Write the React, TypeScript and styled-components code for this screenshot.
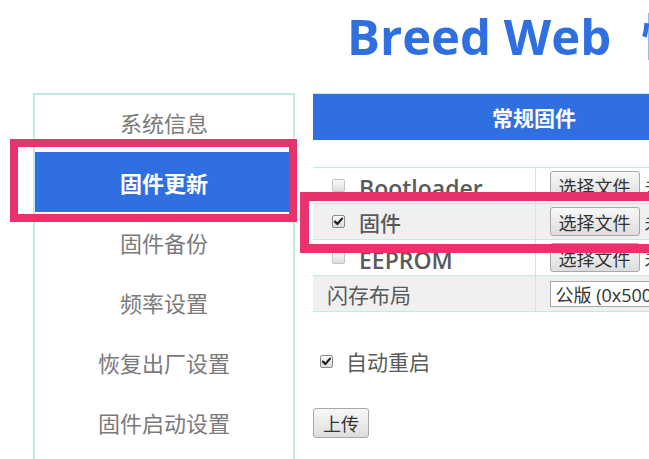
import React from 'react';
import styled, { createGlobalStyle } from 'styled-components';

const GlobalStyle = createGlobalStyle`
    html, body {
        margin: 0;
        padding: 0;
        background: #ffffff;
        overflow: hidden;
    }
    body {
        font-family: 'Open Sans', 'Noto Sans CJK SC', sans-serif;
    }
`;

const NAV_ITEMS = ['系统信息', '固件更新', '固件备份', '频率设置', '恢复出厂设置', '固件启动设置'];

interface FirmwareRow {
    label: string;
    checked: boolean;
    latin: boolean;
}

const FIRMWARE_ROWS: FirmwareRow[] = [
    { label: 'Bootloader', checked: false, latin: true },
    { label: '固件', checked: true, latin: false },
    { label: 'EEPROM', checked: false, latin: true },
];

const Check = ({ checked }: { checked: boolean }) => (
    <CheckBox $checked={checked}>
        {checked && (
            <svg width="11" height="11" viewBox="0 0 11 11">
                <path d="M2 5.6 L4.4 8 L9 2.6" fill="none" stroke="#222" strokeWidth="2.2" strokeLinecap="round" strokeLinejoin="round" />
            </svg>
        )}
    </CheckBox>
);

export default function App() {
    return (
        <Page>
            <GlobalStyle />
            <Header>
                <Title>
                    Breed Web <TitleTail>恢复控制台</TitleTail>
                </Title>
            </Header>
            <Layout>
                <Sidebar>
                    {NAV_ITEMS.map((item) => (
                        <NavItem key={item} $active={item === '固件更新'}>
                            {item}
                            {item === '固件更新' && <NavMarker />}
                        </NavItem>
                    ))}
                </Sidebar>
                <Main>
                    <SectionBar>常规固件</SectionBar>
                    <Table>
                        <colgroup>
                            <col style={{ width: 222 }} />
                            <col />
                        </colgroup>
                        <tbody>
                            {FIRMWARE_ROWS.map((row, i) => (
                                <Row key={row.label} $shaded={i % 2 === 1}>
                                    <LabelCell>
                                        <LabelWrap>
                                            <Check checked={row.checked} />
                                            <RowLabel $latin={row.latin}>{row.label}</RowLabel>
                                        </LabelWrap>
                                        {row.checked && <RowMarker />}
                                    </LabelCell>
                                    <ValueCell>
                                        <FileButton>选择文件</FileButton>
                                        <FileHint>未选择任何文件</FileHint>
                                    </ValueCell>
                                </Row>
                            ))}
                            <Row $shaded>
                                <LabelCell>
                                    <PlainLabel>闪存布局</PlainLabel>
                                </LabelCell>
                                <ValueCell>
                                    <LayoutSelect>公版 (0x50000)</LayoutSelect>
                                </ValueCell>
                            </Row>
                        </tbody>
                    </Table>
                    <OptionRow>
                        <Check checked />
                        <OptionText>自动重启</OptionText>
                    </OptionRow>
                    <UploadButton>上传</UploadButton>
                </Main>
            </Layout>
        </Page>
    );
}

const Page = styled.div`
    width: 649px;
    height: 459px;
    overflow: hidden;
    position: relative;
`;

const Header = styled.div`
    height: 93px;
    padding-left: 347px;
    box-sizing: border-box;
`;

const Title = styled.h1`
    margin: 0;
    padding-top: 2px;
    font-family: 'Open Sans', 'Noto Sans CJK SC', sans-serif;
    font-weight: 700;
    font-size: 49px;
    line-height: 68px;
    color: #2f6fe0;
    white-space: nowrap;
`;

const TitleTail = styled.span`
    margin-left: 17px;
`;

const Layout = styled.div`
    display: flex;
    gap: 18px;
    padding-left: 33px;
    align-items: flex-start;
`;

const Sidebar = styled.nav`
    width: 262px;
    flex-shrink: 0;
    box-sizing: border-box;
    border: 2px solid #bdeee5;
    height: 380px;
`;

const NavItem = styled.div<{ $active?: boolean }>`
    position: relative;
    height: 60px;
    display: flex;
    align-items: center;
    justify-content: center;
    font-family: 'Noto Sans CJK SC', sans-serif;
    font-size: 22px;
    font-weight: ${({ $active }) => ($active ? 700 : 400)};
    color: ${({ $active }) => ($active ? '#ffffff' : '#7a7a7a')};
    background: ${({ $active }) => ($active ? '#2f6fe0' : 'transparent')};

    &:first-child {
        margin-top: -3px;
    }
`;

const NavMarker = styled.span`
    position: absolute;
    left: -25px;
    top: -13px;
    width: 287px;
    height: 83px;
    box-sizing: border-box;
    border: 8px solid #e8326b;
    pointer-events: none;
`;

const Main = styled.div`
    width: 442px;
    flex-shrink: 0;
    display: flex;
    flex-direction: column;
    align-items: flex-start;
`;

const SectionBar = styled.div`
    align-self: stretch;
    height: 47px;
    display: flex;
    align-items: center;
    justify-content: center;
    background: #2f6fe0;
    border-top: 1px solid #bdeee5;
    box-sizing: border-box;
    color: #ffffff;
    font-family: 'Noto Sans CJK SC', sans-serif;
    font-weight: 700;
    font-size: 21px;
`;

const Table = styled.table`
    margin-top: 27px;
    width: 100%;
    table-layout: fixed;
    border-collapse: collapse;
    border-top: 1px solid #bdeee5;
`;

const Row = styled.tr<{ $shaded?: boolean }>`
    height: 36px;
    background: ${({ $shaded }) => ($shaded ? '#f0f0f0' : '#ffffff')};
    border-bottom: 1px solid #bdeee5;
`;

const LabelCell = styled.td`
    position: relative;
    padding: 0 0 0 14px;
    border-right: 1px solid #bdeee5;
`;

const ValueCell = styled.td`
    padding: 0 0 0 14px;
    white-space: nowrap;
    overflow: visible;
`;

const LabelWrap = styled.div`
    display: flex;
    align-items: center;
    gap: 14px;
    padding-left: 5px;
`;

const RowLabel = styled.span<{ $latin?: boolean }>`
    font-family: ${({ $latin }) =>
        $latin ? "'Open Sans', sans-serif" : "'Noto Sans CJK SC', sans-serif"};
    font-weight: ${({ $latin }) => ($latin ? 600 : 500)};
    font-size: ${({ $latin }) => ($latin ? '23px' : '21px')};
    line-height: 28px;
    margin-top: ${({ $latin }) => ($latin ? '4px' : '0')};
    color: #5a5a5a;
`;

const PlainLabel = styled.span`
    font-family: 'Noto Sans CJK SC', sans-serif;
    font-size: 21px;
    color: #5a5a5a;
`;

const RowMarker = styled.span`
    position: absolute;
    left: -13px;
    top: -12px;
    width: 400px;
    height: 61px;
    box-sizing: border-box;
    border: 9px solid #e8326b;
    pointer-events: none;
    z-index: 2;
`;

const CheckBox = styled.span<{ $checked?: boolean }>`
    width: 13px;
    height: 13px;
    flex-shrink: 0;
    display: inline-flex;
    align-items: center;
    justify-content: center;
    box-sizing: border-box;
    border: 1px solid ${({ $checked }) => ($checked ? '#8a8a8a' : '#c4c4c4')};
    border-radius: 2px;
    background: linear-gradient(#fbfbfb, #dcdcdc);
`;

const FileButton = styled.button`
    height: 29px;
    padding: 0 8px;
    font-family: 'Noto Sans CJK SC', sans-serif;
    font-size: 18px;
    color: #333;
    background: linear-gradient(#f8f8f8, #dddddd);
    border: 1px solid #a8a8a8;
    border-radius: 3px;
    vertical-align: middle;
`;

const FileHint = styled.span`
    margin-left: 5px;
    font-family: 'Noto Sans CJK SC', sans-serif;
    font-size: 18px;
    color: #444;
    vertical-align: middle;
`;

const LayoutSelect = styled.div`
    display: inline-flex;
    align-items: center;
    height: 26px;
    width: 200px;
    padding: 0 5px;
    box-sizing: border-box;
    border: 1px solid #a8a8a8;
    background: #ffffff;
    font-family: 'Open Sans', 'Noto Sans CJK SC', sans-serif;
    font-size: 18px;
    color: #333;
    vertical-align: middle;
`;

const OptionRow = styled.label`
    margin-top: 34px;
    height: 30px;
    display: flex;
    align-items: center;
    gap: 13px;
    padding-left: 7px;
`;

const OptionText = styled.span`
    font-family: 'Noto Sans CJK SC', sans-serif;
    font-size: 21px;
    color: #5a5a5a;
`;

const UploadButton = styled.button`
    margin-top: 32px;
    height: 30px;
    padding: 0 9px;
    font-family: 'Noto Sans CJK SC', sans-serif;
    font-size: 18px;
    color: #333;
    background: linear-gradient(#f8f8f8, #dddddd);
    border: 1px solid #a8a8a8;
    border-radius: 3px;
`;
